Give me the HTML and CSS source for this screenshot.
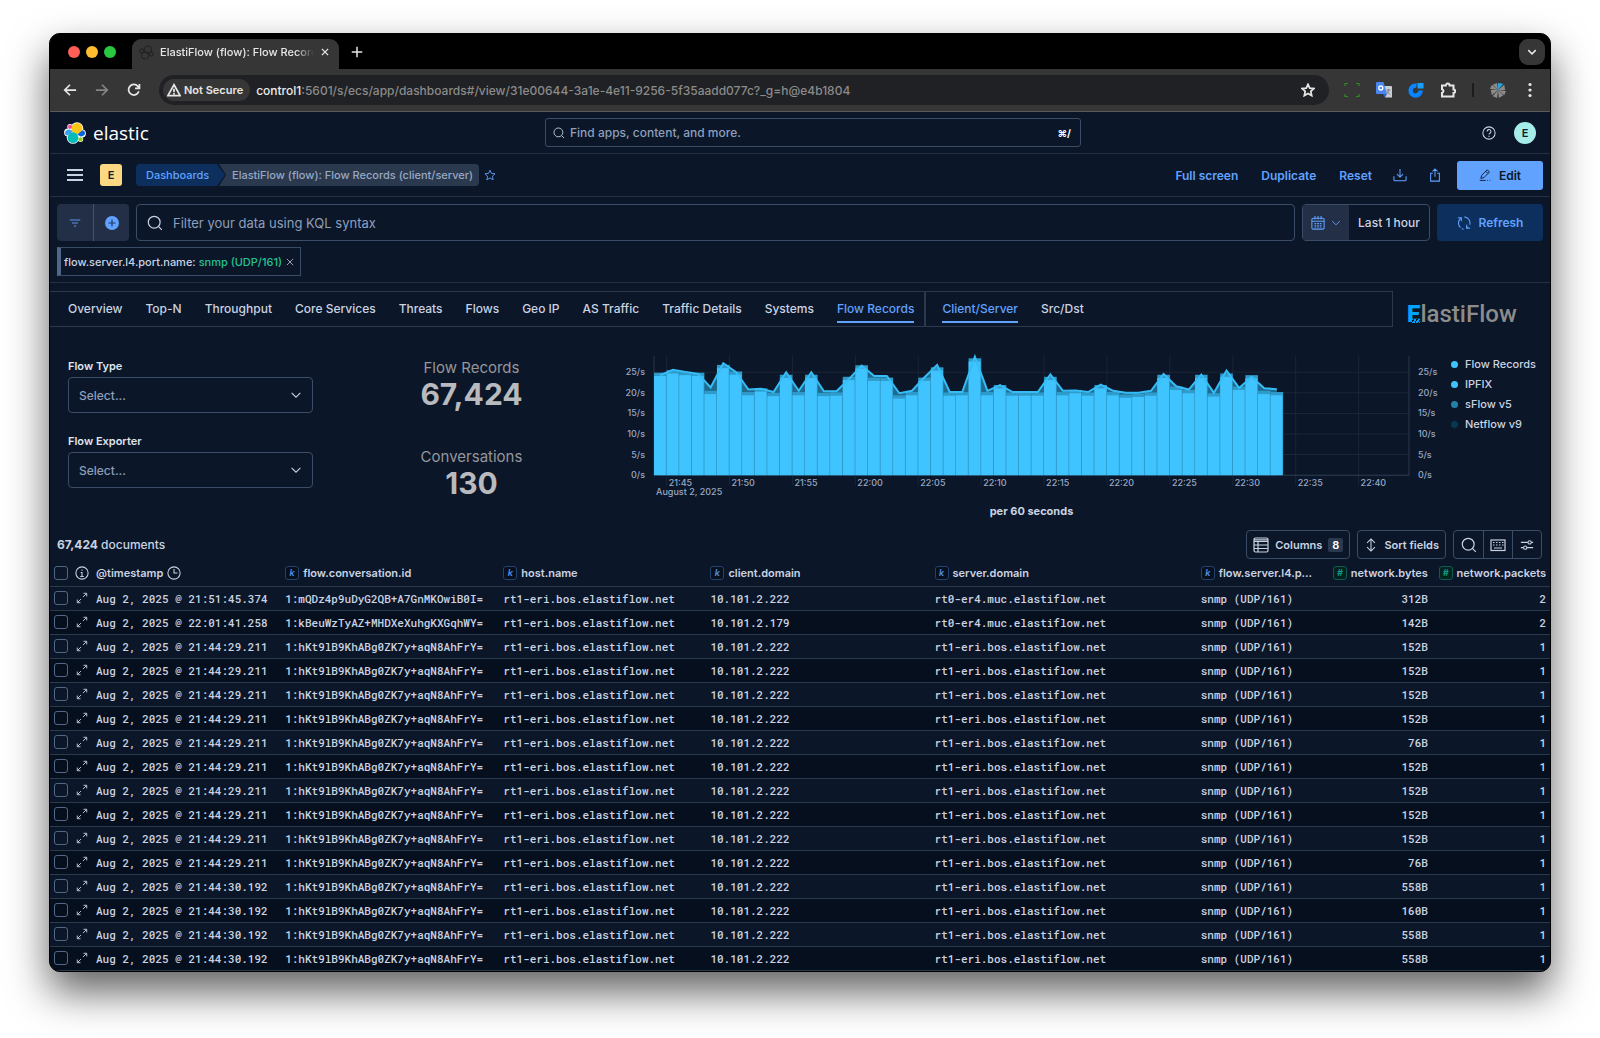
FILE: index.html
```html
<!DOCTYPE html>
<html lang="en">
<head>
    <meta charset="UTF-8">
    <meta name="viewport" content="width=device-width, initial-scale=1.0">
    <title>ElastiFlow (flow): Flow Records (client/server)</title>
    <link rel="stylesheet" href="styles.css">
</head>
<body>
    <!-- Shared icons -->
    <svg class="sprite" width="0" height="0">
        <symbol id="i-search" viewBox="0 0 16 16"><circle cx="7.2" cy="7.2" r="5.9"/><path d="M11.4 11.4l3.4 3.4"/></symbol>
        <symbol id="i-down" viewBox="0 0 16 16"><path d="M3 5.5l5 5 5-5"/></symbol>
        <symbol id="i-close" viewBox="0 0 16 16"><path d="M3 3l10 10M13 3L3 13"/></symbol>
        <symbol id="i-star" viewBox="0 0 16 16"><path d="M8 1.5l2 4.4 4.7.5-3.5 3.2 1 4.8L8 12l-4.2 2.4 1-4.8L1.300 6.400 6 5.900z"/></symbol>
        <symbol id="i-expand" viewBox="0 0 16 16"><path d="M9.300 6.700L14 2M10 1.700h4.300V6M6.700 9.300L2 14M1.700 10v4.300H6"/></symbol>
    </svg>

    <div class="window">
        <div class="tab-strip">
            <div class="lights"><span class="light red"></span><span class="light yellow"></span><span class="light green"></span></div>
            <div class="tab">
                <svg class="favicon" viewBox="0 0 16 16"><circle cx="9.500" cy="5" r="4"/><circle cx="6.500" cy="11" r="4"/><circle cx="3" cy="6.500" r="2.300"/><circle cx="13" cy="9.500" r="2.300"/></svg>
                <span class="tab-title">ElastiFlow (flow): Flow Records</span>
                <button class="plain" aria-label="Close tab"><svg class="icon s10 bold" viewBox="0 0 16 16"><use href="#i-close"/></svg></button>
            </div>
            <button class="plain new-tab" aria-label="New tab"><svg class="icon s12 bold" viewBox="0 0 16 16"><path d="M8 1v14M1 8h14"/></svg></button>
            <button class="tab-search" aria-label="Search tabs"><svg class="icon s12 bold" viewBox="0 0 16 16"><use href="#i-down"/></svg></button>
        </div>

        <div class="browser-bar">
            <button class="plain" aria-label="Back"><svg class="icon s14 bold" viewBox="0 0 16 16"><path d="M15 8H2M8 2L2 8l6 6"/></svg></button>
            <button class="plain dim" aria-label="Forward"><svg class="icon s14 bold" viewBox="0 0 16 16"><path d="M1 8h13M8 2l6 6-6 6"/></svg></button>
            <button class="plain" aria-label="Reload"><svg class="icon s14 bold" viewBox="0 0 16 16"><path d="M13.500 9.500A6 6 0 1 1 12.500 4L14 5.500M14.200 1v5h-5"/></svg></button>
            <div class="omnibox">
                <button class="not-secure"><svg class="icon s14 bold" viewBox="0 0 16 16"><path d="M8 2l7 12.500H1zM8 6.500v4M8 11.500v1.500"/></svg>Not Secure</button>
                <span class="url"><b>control1</b>:5601/s/ecs/app/dashboards#/view/31e00644-3a1e-4e11-9256-5f35aadd077c?_g=h@e4b1804</span>
                <button class="plain" aria-label="Bookmark"><svg class="icon s14 bold" viewBox="0 0 16 16"><use href="#i-star"/></svg></button>
            </div>
            <div class="extensions">
                <svg width="16" height="16" viewBox="0 0 16 16" fill="none" stroke="#2f8a22" stroke-width="1.200"><path d="M1 4V1.500h3M12 1.500h3V4M15 12v2.500h-3M4 14.500H1V12"/></svg>
                <svg width="16" height="16" viewBox="0 0 16 16"><path fill="#c9cdd3" d="M7 4h8a1 1 0 0 1 1 1v10.500H9z"/><path fill="#4a86f0" d="M1 0h6.500L11 12H1a1 1 0 0 1-1-1V1a1 1 0 0 1 1-1z"/><path fill="#2d63c8" d="M7 12h4l-2 3.500z"/><circle cx="4.800" cy="6" r="2" fill="none" stroke="#fff" stroke-width="1.300"/><path d="M10.500 8h4M12.500 7v1c0 2-1 3.500-2 4M11 9.500l3 3" fill="none" stroke="#7a8088"/></svg>
                <svg width="16" height="16" viewBox="0 0 16 16"><path d="M8.500 3.700A5 5 0 1 0 12.600 8.500" fill="none" stroke="#0b84ff" stroke-width="4.400"/><path fill="#19a0ff" d="M9.500 1h6v5.500h-6z"/></svg>
                <svg class="icon s16 bold" viewBox="0 0 16 16"><path d="M2 3.500h3.800a1.900 1.900 0 0 1 3.800 0h3.900v4a1.700 1.700 0 0 1 0 3.400v3.600H2v-3.600a1.900 1.900 0 0 0 0-3.700z"/></svg>
                <span class="ext-divider"></span>
                <svg width="16" height="16" viewBox="0 0 18 18"><g fill="#8b8b8b"><path d="M9 9L3 3l5-2z"/><path d="M9 9L0 8l2-5z"/><path d="M9 9L2 15 1 9z"/><path d="M9 9l-1 9-5-2z"/><path d="M9 9l6 6-5 3z"/><path d="M9 9l9 1-2 5z"/><path d="M9 9l7-6 1 6z"/></g><path fill="#27a5dd" d="M9 9V1l6 1z"/></svg>
                <svg width="16" height="16" viewBox="0 0 16 16" fill="#e6e6e6"><circle cx="8" cy="2.500" r="1.600"/><circle cx="8" cy="8" r="1.600"/><circle cx="8" cy="13.500" r="1.600"/></svg>
            </div>
        </div>

        <header class="header-bar">
            <a class="brand" href="#">
                <svg width="22" height="22" viewBox="0 0 22 22">
                    <circle cx="13" cy="6.500" r="6.300" fill="#fff"/><circle cx="9" cy="15.500" r="6.300" fill="#fff"/><circle cx="11" cy="11" r="8" fill="#fff"/><circle cx="4" cy="10.500" r="3.900" fill="#fff"/><circle cx="18" cy="11.500" r="3.900" fill="#fff"/><circle cx="6" cy="4.800" r="2.700" fill="#fff"/><circle cx="16.500" cy="17.200" r="2.700" fill="#fff"/>
                    <circle cx="13" cy="6.500" r="5.500" fill="#fec514"/><circle cx="9" cy="15.700" r="5.400" fill="#02bcb7"/>
                    <path d="M5.500 7.500c2 .5 3 1.200 3 2.500l-5 3.500C1.500 13.500.800 12 1 10.500 1.200 9 2.800 7.300 5.500 7.500z" fill="#36a2ef"/>
                    <path d="M18.500 8.300c2 .4 2.700 1.700 2.500 3.200-.2 1.600-1.800 2.900-4.300 2.900l-3.500-1.800z" fill="#0b64dd"/>
                    <circle cx="6" cy="4.800" r="2.100" fill="#f04e98"/><circle cx="16.500" cy="17.300" r="2.100" fill="#93c90e"/>
                </svg>
                <span>elastic</span>
            </a>
            <label class="global-search">
                <svg class="icon s12" viewBox="0 0 16 16"><use href="#i-search"/></svg>
                <input type="text" placeholder="Find apps, content, and more." aria-label="Find apps, content, and more.">
                <span class="shortcut">⌘/</span>
            </label>
            <div class="header-right">
                <button class="plain" aria-label="Help"><svg class="icon s14" viewBox="0 0 16 16"><circle cx="8" cy="8" r="7"/><path d="M5.800 6.300a2.200 2.200 0 1 1 3.300 1.900c-.8.500-1.100.8-1.100 1.600M8 11v1.500"/></svg></button>
                <button class="avatar user">E</button>
            </div>
        </header>

        <div class="header-bar app-bar">
            <button class="plain" aria-label="Menu"><svg class="icon s16 bold" viewBox="0 0 16 16"><path d="M0 3h16M0 8h16M0 13h16"/></svg></button>
            <button class="avatar space">E</button>
            <nav class="crumbs">
                <a class="crumb first" href="#">Dashboards</a>
                <span class="crumb last">ElastiFlow (flow): Flow Records (client/server)</span>
            </nav>
            <button class="plain link" aria-label="Favourite"><svg class="icon s12" viewBox="0 0 16 16"><use href="#i-star"/></svg></button>
            <div class="actions">
                <a href="#">Full screen</a>
                <a href="#">Duplicate</a>
                <a href="#">Reset</a>
                <button class="plain link" aria-label="Export"><svg class="icon s14" viewBox="0 0 16 16"><path d="M8 1v9M4.500 7L8 10.300 11.500 7M1 9.500V13a1.500 1.500 0 0 0 1.500 1.500h11A1.500 1.500 0 0 0 15 13V9.500"/></svg></button>
                <button class="plain link" aria-label="Share"><svg class="icon s14" viewBox="0 0 16 16"><path d="M8 10V1.500M5 4l3-3 3 3M5.500 6H3v9h10V6h-2.500"/></svg></button>
                <button class="edit-btn"><svg class="icon s12" viewBox="0 0 16 16"><path d="M2.500 12.500l1-4L11 1l3 3-7.500 7.500zM9 3l3 3M1 15.200h8M11 15.200h1M14 15.200h1"/></svg>Edit</button>
            </div>
        </div>

        <section class="query">
            <div class="query-row">
                <div class="filter-group">
                    <button aria-label="Saved queries"><svg class="icon s12" viewBox="0 0 16 16"><path d="M1 4h14M4 8h8M6.500 12h3"/></svg></button>
                    <button aria-label="Add filter"><svg width="14" height="14" viewBox="0 0 14 14"><circle cx="7" cy="7" r="7" fill="#61a2ff"/><path d="M7 3.500v7M3.500 7h7" stroke="#1d3a66" stroke-width="1.200"/></svg></button>
                </div>
                <label class="kql">
                    <svg class="icon s16" viewBox="0 0 16 16"><use href="#i-search"/></svg>
                    <input type="text" placeholder="Filter your data using KQL syntax" aria-label="Filter your data using KQL syntax">
                </label>
                <div class="date-picker">
                    <button class="calendar" aria-label="Date quick select">
                        <svg class="icon s14" viewBox="0 0 16 16"><rect x="1" y="2.500" width="14" height="12.500" rx="1.500"/><path d="M1 6h14M4.500 0v4M8 0v4M11.500 0v4M4 8.500h2M7 8.500h2M10 8.500h2M4 10.500h2M7 10.500h2M10 10.500h2M4 12.500h2M7 12.500h2M10 12.500h2"/></svg>
                        <svg class="icon s12" viewBox="0 0 16 16"><use href="#i-down"/></svg>
                    </button>
                    <button class="range">Last 1 hour</button>
                </div>
                <button class="refresh-btn"><svg class="icon s14" viewBox="0 0 16 16"><path d="M1 2h4v4M4.800 2.300A7 7 0 0 0 4 13.300M8.500 1A7 7 0 0 1 14.500 10M15 14h-4v-4M11.200 13.700A7 7 0 0 0 13 12.300M5.500 14.600a7 7 0 0 0 2 .4"/></svg>Refresh</button>
            </div>
            <div class="pill">
                <span>flow.server.l4.port.name: <em>snmp (UDP/161)</em></span>
                <button class="plain" aria-label="Remove filter"><svg class="icon s10" viewBox="0 0 16 16"><use href="#i-close"/></svg></button>
            </div>
        </section>

        <div class="nav-row">
            <nav class="dash-nav">
                <div class="nav-links">
                    <a href="#">Overview</a>
                    <a href="#">Top-N</a>
                    <a href="#">Throughput</a>
                    <a href="#">Core Services</a>
                    <a href="#">Threats</a>
                    <a href="#">Flows</a>
                    <a href="#">Geo IP</a>
                    <a href="#">AS Traffic</a>
                    <a href="#">Traffic Details</a>
                    <a href="#">Systems</a>
                    <a class="active" href="#">Flow Records</a>
                </div>
                <div class="nav-links sub">
                    <a class="active" href="#">Client/Server</a>
                    <a href="#">Src/Dst</a>
                </div>
            </nav>
            <div class="flow-logo"><b>E</b>lastiFlow</div>
        </div>

        <section class="panels">
            <div class="controls">
                <label for="flowType">Flow Type</label>
                <div class="select-wrap">
                    <select id="flowType"><option>Select...</option></select>
                    <svg class="icon s14" viewBox="0 0 16 16"><use href="#i-down"/></svg>
                </div>
                <label for="flowExporter">Flow Exporter</label>
                <div class="select-wrap">
                    <select id="flowExporter"><option>Select...</option></select>
                    <svg class="icon s14" viewBox="0 0 16 16"><use href="#i-down"/></svg>
                </div>
            </div>
            <div class="metrics">
                <div class="metric"><span>Flow Records</span><strong>67,424</strong></div>
                <div class="metric"><span>Conversations</span><strong>130</strong></div>
            </div>
            <svg class="chart" id="chart" viewBox="0 0 832 170"></svg>
            <ul class="legend">
                <li><i class="dot records"></i>Flow Records</li>
                <li><i class="dot ipfix"></i>IPFIX</li>
                <li><i class="dot sflow"></i>sFlow v5</li>
                <li><i class="dot netflow"></i>Netflow v9</li>
            </ul>
        </section>

        <div class="grid-bar">
            <span class="doc-count"><b>67,424</b> documents</span>
            <button class="grid-btn"><svg class="icon s16" viewBox="0 0 16 16"><rect x="1" y="1" width="14" height="14" rx="1.500"/><path d="M1 4.500h14M1 8h14M1 11.500h14M5 4.500V15M1 2.800h14"/></svg>Columns <span class="count">8</span></button>
            <button class="grid-btn"><svg class="icon s14" viewBox="0 0 16 16"><path d="M8 1v14M3.500 5.500L8 1l4.500 4.500M3.500 10.500L8 15l4.500-4.500"/></svg>Sort fields</button>
            <div class="btn-group">
                <button aria-label="Search in table"><svg class="icon s16" viewBox="0 0 16 16"><use href="#i-search"/></svg></button>
                <button aria-label="Keyboard shortcuts"><svg class="icon s16" viewBox="0 0 16 16"><rect x="1" y="3" width="14" height="10.500"/><path d="M3 5.500h1.500M6 5.500h1.500M9 5.500h1.500M12 5.500h1.500M3 8h1.500M6 8h1.500M9 8h1.500M12 8h1.500M4 11h8"/></svg></button>
                <button aria-label="Display options"><svg class="icon s14" viewBox="0 0 16 16"><path d="M1 5h8M13 5h2M1 11h3M8 11h7"/><circle cx="11" cy="5" r="1.900"/><circle cx="6" cy="11" r="1.900"/></svg></button>
            </div>
        </div>

        <table class="grid">
            <colgroup>
                <col width="46"><col width="189"><col width="218"><col width="207"><col width="224"><col width="266"><col width="130"><col width="97"><col width="122">
            </colgroup>
            <thead>
                <tr>
                    <th><div class="cell"><input type="checkbox" aria-label="Select all rows"><svg class="icon s14" viewBox="0 0 16 16"><circle cx="8" cy="8" r="7"/><path d="M8 4v1.500M6.500 7.500H8V12M6 12h4"/></svg></div></th>
                    <th><div class="cell">@timestamp <svg class="icon s14" viewBox="0 0 16 16"><circle cx="8" cy="8" r="7"/><path d="M8 3.500V8h4"/></svg></div></th>
                    <th><div class="cell"><i class="token">k</i>flow.conversation.id</div></th>
                    <th><div class="cell"><i class="token">k</i>host.name</div></th>
                    <th><div class="cell"><i class="token">k</i>client.domain</div></th>
                    <th><div class="cell"><i class="token">k</i>server.domain</div></th>
                    <th><div class="cell"><i class="token">k</i>flow.server.l4.p...</div></th>
                    <th><div class="cell end"><i class="token num">#</i>network.bytes</div></th>
                    <th><div class="cell end last"><i class="token num">#</i>network.packets</div></th>
                </tr>
            </thead>
            <tbody id="rows"></tbody>
        </table>
    </div>
    <script src="script.js"></script>
</body>
</html>
```
FILE: styles.css
```css
* {
    box-sizing: border-box;
}

body {
    margin: 0;
    padding: 33px 49px 66px;
    background: #ffffff;
    font-family: Inter, "Liberation Sans", sans-serif;
    font-size: 12px;
    font-weight: 500;
    color: #cad3e2;
}

button, input, select {
    font: inherit;
    color: inherit;
}

button {
    display: inline-flex;
    align-items: center;
    justify-content: center;
    padding: 0;
    border: none;
    background: none;
    font-weight: 600;
    white-space: nowrap;
}

a {
    color: inherit;
    text-decoration: none;
}

input::placeholder {
    color: #8e9fbc;
    opacity: 1;
}

.sprite {
    position: absolute;
}

.icon {
    flex: none;
    fill: none;
    stroke: currentColor;
    stroke-width: 1.2;
}

.icon.bold { stroke-width: 2; }
.s10 { width: 10px; height: 10px; }
.s12 { width: 12px; height: 12px; }
.s14 { width: 14px; height: 14px; }
.s16 { width: 16px; height: 16px; }

.window {
    overflow: hidden;
    border: 1px solid #4a4f58;
    outline: 1px solid #000000;
    outline-offset: -1px;
    border-radius: 11px;
    background: #0b1628;
    box-shadow: 0 20px 40px rgba(0, 0, 0, 0.62);
}

/* Browser chrome */
.tab-strip {
    display: flex;
    align-items: center;
    height: 35px;
    padding: 0 5px 0 18px;
    background: #000000;
    color: #e6e6e6;
}

.lights {
    display: flex;
    gap: 6px;
    width: 64px;
}

.light {
    width: 12px;
    height: 12px;
    border-radius: 50%;
}

.red { background: #ff5f57; }
.yellow { background: #febc2e; }
.green { background: #28c840; }

.tab {
    display: flex;
    align-items: center;
    align-self: flex-end;
    gap: 6px;
    width: 207px;
    height: 30px;
    padding: 0 9px 4px 7px;
    border-radius: 9px 9px 0 0;
    background: #363636;
    font-size: 11px;
}

.favicon {
    flex: none;
    width: 15px;
    height: 15px;
    fill: none;
    stroke: #1f1f1f;
}

.tab-title {
    flex: 1;
    overflow: hidden;
    white-space: nowrap;
    mask-image: linear-gradient(to right, #000 88%, transparent);
}

.new-tab {
    margin-left: 12px;
}

.tab-search {
    width: 26px;
    height: 26px;
    margin-left: auto;
    border-radius: 9px;
    background: #363636;
}

.browser-bar {
    display: flex;
    align-items: center;
    gap: 18px;
    height: 43px;
    padding: 0 12px 0 13px;
    border-bottom: 1px solid #5b5b5b;
    background: #363636;
    color: #e6e6e6;
}

.dim {
    color: #858585;
}

.omnibox {
    flex: 1;
    display: flex;
    align-items: center;
    height: 30px;
    padding: 0 14px 0 4px;
    border-radius: 15px;
    background: #202124;
}

.not-secure {
    gap: 3px;
    height: 22px;
    padding: 0 7px 0 4px;
    border-radius: 11px;
    background: #363636;
    font-size: 11px;
}

.url {
    flex: 1;
    margin-left: 6px;
    color: #8b8b8b;
}

.url b {
    color: #ececec;
    font-weight: 500;
}

.extensions {
    display: flex;
    align-items: center;
    gap: 16px;
    margin-left: -3px;
}

.ext-divider {
    width: 2px;
    height: 14px;
    background: #1c1c1c;
}

/* Kibana header */
.header-bar {
    display: flex;
    align-items: center;
    height: 42px;
    padding: 0 14px 0 17px;
    border-bottom: 1px solid #233146;
}

.app-bar {
    height: 43px;
}

.brand {
    display: flex;
    flex: 1 1 26px;
    align-items: center;
    gap: 7px;
    margin-left: -3px;
    color: #ffffff;
    font-family: "Open Sans", sans-serif;
    font-size: 19px;
    font-weight: 400;
}

.global-search {
    display: flex;
    flex: 0 1 536px;
    align-items: center;
    gap: 5px;
    height: 29px;
    padding: 0 9px 0 7px;
    border: 1px solid #3a4c66;
    border-radius: 3px;
}

.global-search input, .kql input {
    flex: 1;
    min-width: 0;
    padding: 0;
    border: none;
    background: none;
}

.shortcut {
    color: #ffffff;
    font-size: 10px;
    font-weight: 700;
}

.header-right {
    display: flex;
    flex: 1 1 0;
    align-items: center;
    justify-content: flex-end;
    gap: 18px;
}

.avatar {
    width: 22px;
    height: 22px;
    color: #111c2c;
    font-size: 11px;
}

.user {
    border-radius: 50%;
    background: #a6edea;
}

.space {
    margin: 0 14px 0 17px;
    border-radius: 3px;
    background: #fcd883;
}

.crumbs {
    display: flex;
    margin-right: 5px;
    font-size: 11px;
}

.crumb {
    height: 22px;
    line-height: 22px;
}

.crumb.first {
    width: 89px;
    padding-left: 10px;
    border-radius: 4px 0 0 4px;
    background: #0d2f5e;
    color: #61a2ff;
    clip-path: polygon(0 0, 91% 0, 100% 50%, 91% 100%, 0 100%);
}

.crumb.last {
    margin-left: -6px;
    padding: 0 6px 0 13px;
    border-radius: 0 4px 4px 0;
    background: #2b394f;
    color: #98a8c3;
    clip-path: polygon(0 0, 100% 0, 100% 100%, 0 100%, 7px 50%);
}

.link, .actions a {
    color: #61a2ff;
}

.actions {
    display: flex;
    align-items: center;
    gap: 21px;
    margin: 0 -7px 0 auto;
    font-weight: 600;
}

.actions a + a {
    margin-left: 2px;
}

.edit-btn {
    gap: 8px;
    width: 86px;
    height: 29px;
    margin-left: -6px;
    border-radius: 3px;
    background: #61a2ff;
    color: #0b1628;
}

/* Query bar */
.query {
    padding: 7px 7px 6px;
    border-bottom: 1px solid #233146;
}

.query-row {
    display: flex;
    gap: 7px;
    height: 37px;
    margin-bottom: 6px;
}

.filter-group {
    display: flex;
    border-radius: 4px;
    background: #232f46;
    color: #61a2ff;
}

.filter-group button {
    width: 36px;
}

.filter-group button + button {
    border-left: 1px solid #41546f;
}

.kql {
    display: flex;
    flex: 1;
    align-items: center;
    gap: 10px;
    padding: 0 10px;
    border: 1px solid #3a4c66;
    border-radius: 4px;
}

.kql input {
    font-size: 13px;
    font-weight: 400;
}

.date-picker {
    display: flex;
    border: 1px solid #3a4c66;
    border-radius: 4px;
}

.calendar {
    gap: 5px;
    width: 46px;
    background: #232f46;
    color: #61a2ff;
}

.range {
    width: 80px;
    font-weight: 500;
}

.refresh-btn {
    gap: 8px;
    width: 106px;
    border-radius: 4px;
    background: #0d2f5e;
    color: #61a2ff;
}

.pill {
    display: inline-flex;
    align-items: center;
    gap: 3px;
    height: 29px;
    padding: 0 5px 0 3px;
    border: 1px solid #3a4c66;
    border-left: 4px solid #516787;
    font-size: 11px;
    vertical-align: top;
}

.pill em {
    color: #24c292;
    font-style: normal;
}

/* Dashboard navigation */
.nav-row {
    display: flex;
    align-items: center;
    margin-top: 7px;
}

.dash-nav {
    display: flex;
    flex: 1;
    height: 36px;
    border: 1px solid #2b394f;
    border-left: none;
}

.nav-links {
    display: flex;
    align-items: center;
    gap: 23px;
    padding: 0 10px 0 18px;
    white-space: nowrap;
}

.nav-links a {
    height: 28px;
    line-height: 28px;
}

.nav-links .active {
    border-bottom: 2px solid #61a2ff;
    color: #61a2ff;
}

.sub {
    border-left: 2px solid #2b394f;
    padding-left: 16px;
}

.flow-logo {
    width: 157px;
    padding: 10px 0 0 14px;
    color: #8c8c8c;
    font-family: Roboto, sans-serif;
    font-size: 24px;
    font-weight: 500;
    line-height: 28px;
}

.flow-logo b {
    position: relative;
    color: #00a3ff;
    font-weight: 900;
}

/* Hatching on the foot of the E */
.flow-logo b::after {
    content: "";
    position: absolute;
    right: 0;
    bottom: 5px;
    width: 9px;
    height: 4px;
    background: repeating-linear-gradient(120deg, #00a3ff 0 2px, #0b1628 2px 3px);
}

/* Panels */
.panels {
    display: grid;
    grid-template-columns: 245px 301px 1fr 103px;
    height: 202px;
    padding: 22px 0 0 18px;
}

.controls {
    padding-top: 8px;
    font-size: 11px;
}

.controls label {
    display: block;
    margin-bottom: 3px;
    font-weight: 600;
    line-height: 16px;
    color: #dfe5ef;
}

.select-wrap {
    position: relative;
    margin-bottom: 20px;
}

.select-wrap select {
    display: block;
    width: 100%;
    height: 36px;
    padding: 0 10px;
    border: 1px solid #3a4c66;
    border-radius: 4px;
    background: #0b1628;
    color: #8e9fbc;
    font-size: 12px;
    appearance: none;
}

.select-wrap .icon {
    position: absolute;
    top: 11px;
    right: 10px;
}

.metrics {
    display: flex;
    flex-direction: column;
    gap: 37px;
    padding: 8px 0 0 16px;
    text-align: center;
}

.metric span, .metric strong {
    display: block;
}

.metric span {
    color: #95979c;
    font-size: 15px;
    font-weight: 400;
    line-height: 20px;
}

.metric strong {
    color: #b8babd;
    font-size: 30px;
    line-height: 32px;
}

.chart {
    display: block;
    width: 100%;
}

.chart text {
    fill: #98a8c3;
    font-size: 9px;
}

.chart .axis-title {
    fill: #cad3e2;
    font-size: 11px;
    font-weight: 700;
    text-anchor: middle;
}

.gridline {
    stroke: #1a2537;
}

.axis {
    stroke: #2b394f;
}

.bar {
    fill: #40c4ff;
}

.bar-top {
    fill: #2f9bcb;
}

.area {
    fill: #1f6b8f;
}

.line {
    fill: none;
    stroke: #35bdf8;
    stroke-width: 2;
}

.legend {
    margin: 0;
    padding: 4px 0 0 4px;
    list-style: none;
    font-size: 11px;
}

.legend li {
    display: flex;
    align-items: center;
    gap: 7px;
    height: 20px;
    white-space: nowrap;
}

.dot {
    width: 7px;
    height: 7px;
    border-radius: 50%;
    background: #40c4ff;
}

.dot.sflow { background: #2380a8; }
.dot.netflow { background: #06384f; }

/* Documents grid */
.grid-bar {
    display: flex;
    gap: 7px;
    height: 30px;
    padding: 0 8px 1px 7px;
}

.doc-count {
    flex: 1;
    line-height: 29px;
}

.grid-btn, .btn-group {
    border: 1px solid #3a4c66;
    border-radius: 4px;
}

.grid-btn {
    gap: 6px;
    padding: 0 6px;
    font-size: 11px;
}

.count {
    padding: 0 4px;
    border-radius: 2px;
    background: #2b394f;
    color: #ffffff;
}

.btn-group {
    display: flex;
}

.btn-group button {
    width: 29px;
}

.btn-group button + button {
    border-left: 1px solid #3a4c66;
}

.grid {
    width: 100%;
    border-collapse: collapse;
    table-layout: fixed;
    font-family: "Roboto Mono", "DejaVu Sans Mono", monospace;
    font-size: 11px;
}

.grid th, .grid td {
    height: 24px;
    padding: 0;
    border-bottom: 1px solid #2b394f;
    text-align: left;
    white-space: nowrap;
}

.grid th {
    height: 26px;
    font-family: Inter, "Liberation Sans", sans-serif;
    font-weight: 600;
}

.grid tbody tr:nth-child(even) {
    background: #060f1e;
}

.cell {
    display: flex;
    align-items: center;
    gap: 4px;
}

.cell.end {
    justify-content: flex-end;
}

.grid .num-cell {
    text-align: right;
}

.cell.last, .grid .num-cell:last-child {
    padding-right: 4px;
}

.grid input {
    flex: none;
    width: 14px;
    height: 14px;
    margin: 0 3px 0 4px;
    border: 1px solid #516787;
    border-radius: 3px;
    appearance: none;
}

.grid .plain {
    padding-left: 1px;
}

.token {
    width: 14px;
    height: 14px;
    border: 1px solid #23426f;
    border-radius: 3px;
    background: #08101d;
    color: #5290ea;
    font-size: 9px;
    line-height: 12px;
    text-align: center;
}

.token.num {
    border-color: #0f5a53;
    background: #04231f;
    color: #16a08a;
}
```
FILE: script.js
```js
// Records per second, one bucket per minute from 21:44
const ipfix = [24.1, 24.7, 24.3, 24.1, 19.7, 26.0, 24.4, 19.4, 20.3, 19.2, 23.6, 19.4, 23.6, 19.2, 19.3, 23.1, 25.9,
    22.9, 22.9, 18.6, 19.4, 22.9, 25.4, 19.3, 19.4, 27.6, 19.4, 21.1, 19.3, 19.3, 19.3, 23.1, 19.4, 19.9, 19.3, 21.1,
    19.4, 18.8, 19.0, 19.3, 23.6, 20.7, 19.9, 23.6, 19.1, 23.9, 20.7, 23.5, 19.7, 19.4];
const total = [24.3, 25.6, 25.1, 24.6, 21.3, 27.2, 25.1, 20.8, 21.0, 20.2, 25.0, 20.5, 25.0, 20.4, 20.4, 23.4, 26.6,
    24.1, 24.1, 19.9, 20.5, 23.8, 26.8, 20.2, 20.2, 28.8, 20.5, 21.9, 20.2, 20.2, 20.2, 24.5, 20.5, 20.6, 20.2, 22.0,
    20.5, 20.0, 20.0, 20.5, 24.6, 21.6, 20.8, 24.4, 20.0, 25.4, 21.2, 23.9, 21.1, 20.9];

const plot = { left: 40, right: 794, top: 6, bottom: 125 };
const step = (plot.right - plot.left) / 60;
const y = v => plot.bottom - v * 4.11;

let out = "";
for (let v = 0; v <= 25; v += 5) {
    out += `<line class="gridline" x1="${plot.left}" x2="${plot.right}" y1="${y(v)}" y2="${y(v)}"/>`;
    out += `<text x="31" y="${y(v) + 3}" text-anchor="end">${v}/s</text>`;
    out += `<text x="803" y="${y(v) + 3}">${v}/s</text>`;
}
for (let i = 0; i < 12; i++) {
    const x = plot.left + step * (1 + i * 5);
    const min = 45 + i * 5;
    const label = (21 + Math.floor(min / 60)) + ":" + String(min % 60).padStart(2, "0");
    out += `<line class="gridline" x1="${x}" x2="${x}" y1="${plot.top}" y2="${plot.bottom + 10}"/>`;
    out += `<text x="${x + 2}" y="${plot.bottom + 11}">${label}</text>`;
}
out += `<text x="${plot.left + 2}" y="${plot.bottom + 20}">August 2, 2025</text>`;
out += `<path class="axis" fill="none" d="M${plot.left} ${plot.top}V${plot.bottom}H${plot.right}V${plot.top}"/>`;

const points = total.map((v, i) => `${plot.left + step * (i + 0.5)},${y(v)}`);
out += `<polygon class="area" points="${plot.left + step / 2},${plot.bottom} ${points.join(" ")} ${plot.left + step * 49.5},${plot.bottom}"/>`;
ipfix.forEach((v, i) => {
    const x = plot.left + step * i;
    out += `<rect class="bar-top" x="${x}" y="${y(v + 0.8)}" width="${step}" height="${plot.bottom - y(v + 0.8)}"/>`;
    out += `<rect class="bar" x="${x}" y="${y(v)}" width="${step - 0.8}" height="${plot.bottom - y(v)}"/>`;
});
out += `<polyline class="line" points="${points.join(" ")}"/>`;
out += `<text class="axis-title" x="${(plot.left + plot.right) / 2}" y="165">per 60 seconds</text>`;
document.getElementById("chart").innerHTML = out;

const conv = "1:hKt9lB9KhABg0ZK7y+aqN8AhFrY=";
const rt1 = "rt1-eri.bos.elastiflow.net";
const rows = [
    ["21:51:45.374", "1:mQDz4p9uDyG2QB+A7GnMKOwiB0I=", "10.101.2.222", "rt0-er4.muc.elastiflow.net", "312B", 2],
    ["22:01:41.258", "1:kBeuWzTyAZ+MHDXeXuhgKXGqhWY=", "10.101.2.179", "rt0-er4.muc.elastiflow.net", "142B", 2]
];
["152B", "152B", "152B", "152B", "76B", "152B", "152B", "152B", "152B", "76B"].forEach(b => {
    rows.push(["21:44:29.211", conv, "10.101.2.222", rt1, b, 1]);
});
["558B", "160B", "558B", "558B"].forEach(b => {
    rows.push(["21:44:30.192", conv, "10.101.2.222", rt1, b, 1]);
});

document.getElementById("rows").innerHTML = rows.map((r, i) => `
    <tr>
        <td><div class="cell"><input type="checkbox" aria-label="Select row ${i + 1}"><button class="plain" aria-label="Expand row ${i + 1}"><svg class="icon s12" viewBox="0 0 16 16"><use href="#i-expand"/></svg></button></div></td>
        <td>Aug 2, 2025 @ ${r[0]}</td>
        <td>${r[1]}</td>
        <td>${rt1}</td>
        <td>${r[2]}</td>
        <td>${r[3]}</td>
        <td>snmp (UDP/161)</td>
        <td class="num-cell">${r[4]}</td>
        <td class="num-cell">${r[5]}</td>
    </tr>`).join("");
```
